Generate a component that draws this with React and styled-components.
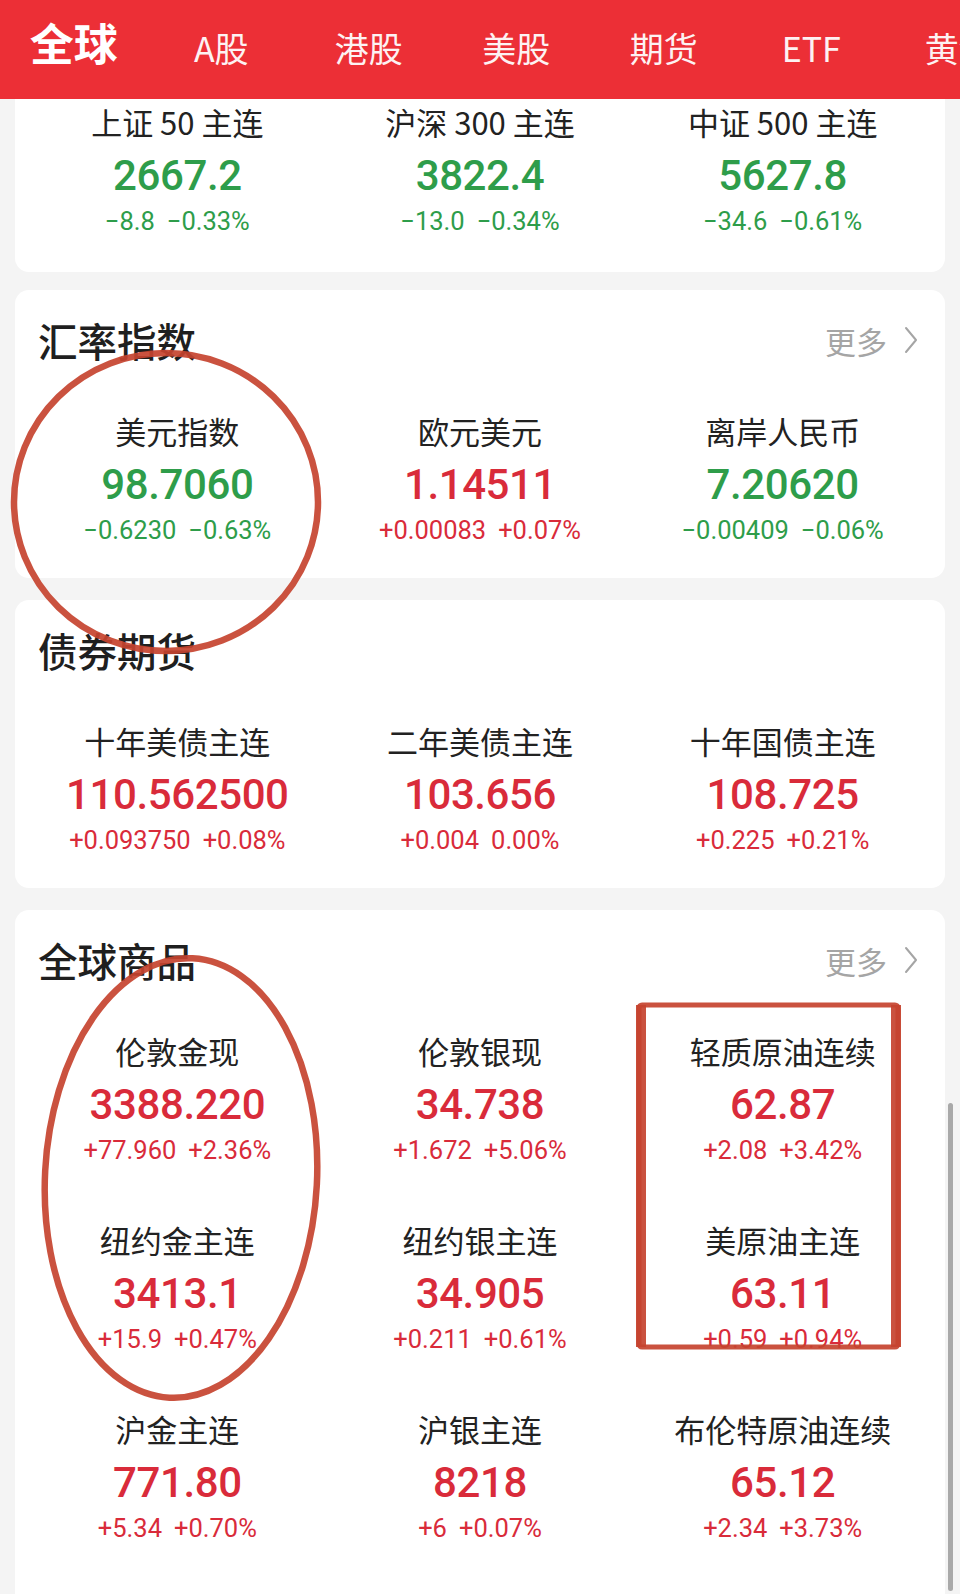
import React from 'react'
import styled, { createGlobalStyle } from 'styled-components'

const GlobalStyle = createGlobalStyle`
  html, body {
    margin: 0;
    padding: 0;
    background: #f4f4f4;
  }
  * {
    box-sizing: border-box;
  }
`

const UP = '#d92b3a'
const DOWN = '#2e9d4a'
const CJK = "'Noto Sans CJK SC', 'Noto Sans', sans-serif"
const NUM = "Roboto, 'Noto Sans', 'Noto Sans CJK SC', sans-serif"

const Page = styled.div`
  position: relative;
  width: 960px;
  height: 1594px;
  overflow: hidden;
  background: #f4f4f4;
  font-family: ${CJK};
  display: flex;
  flex-direction: column;
`

const Header = styled.header`
  position: relative;
  z-index: 1;
  flex-shrink: 0;
  height: 99px;
  background: #ec2f36;
  display: flex;
  align-items: center;
  padding-bottom: 3px;
  overflow: hidden;
  white-space: nowrap;
`

const Tab = styled.span`
  flex: 0 0 147.5px;
  text-align: center;
  color: #fff;
  font-family: ${CJK};
  font-size: ${(p) => (p.active ? '44px' : '34px')};
  font-weight: ${(p) => (p.active ? 700 : 400)};
  line-height: 1;
  margin-top: ${(p) => (p.active ? '-12px' : '0')};
  opacity: ${(p) => (p.active ? 1 : 0.94)};
`

const Feed = styled.main`
  flex: 1;
  display: flex;
  flex-direction: column;
  gap: 22px;
  padding: 0 15px;
`

const Card = styled.section`
  background: #fff;
  border-radius: ${(p) => (p.clipped ? '0 0 14px 14px' : p.open ? '14px 14px 0 0' : '14px')};
  padding: ${(p) => (p.clipped ? '0 11px 35px' : '20px 11px 32px')};
  margin: ${(p) => (p.clipped ? '-2px 0 -4px' : '0')};
  flex: ${(p) => (p.open ? 1 : 'none')};
`

const TitleRow = styled.div`
  display: flex;
  align-items: center;
  justify-content: space-between;
  height: 60px;
  padding: 0 16px 0 12px;
  margin-bottom: 36px;
`

const Title = styled.h2`
  margin: 0;
  font-family: ${CJK};
  font-size: 39.5px;
  font-weight: 500;
  color: #1f1f1f;
  line-height: 60px;
`

const More = styled.span`
  display: flex;
  align-items: center;
  gap: 17px;
  font-family: ${CJK};
  font-size: 31px;
  color: #a5a5a5;
  line-height: 1;
`

const Grid = styled.div`
  display: grid;
  grid-template-columns: repeat(3, 1fr);
  row-gap: 49px;
`

const Quote = styled.div`
  display: flex;
  flex-direction: column;
  align-items: center;
  white-space: nowrap;
`

const Label = styled.div`
  font-family: ${CJK};
  font-size: 31px;
  color: #222;
  line-height: 50px;
`

const Value = styled.div`
  font-family: ${NUM};
  font-size: 42px;
  font-weight: 500;
  letter-spacing: -0.4px;
  line-height: 58px;
  color: ${(p) => (p.down ? DOWN : UP)};
`

const Change = styled.div`
  display: flex;
  gap: 12px;
  font-family: ${NUM};
  font-size: 25.5px;
  line-height: 32px;
  color: ${(p) => (p.down ? DOWN : UP)};
`

const Marks = styled.svg`
  position: absolute;
  left: 0;
  top: 0;
  z-index: 2;
  pointer-events: none;
`

const ScrollThumb = styled.div`
  position: absolute;
  left: 948px;
  top: 1103px;
  width: 5px;
  height: 488px;
  border-radius: 3px;
  background: #a9a9a9;
`

const tabs = ['全球', 'A股', '港股', '美股', '期货', 'ETF', '黄金']

const sections = [
  {
    clipped: true,
    items: [
      ['上证 50 主连', '2667.2', '−8.8', '−0.33%', true],
      ['沪深 300 主连', '3822.4', '−13.0', '−0.34%', true],
      ['中证 500 主连', '5627.8', '−34.6', '−0.61%', true],
    ],
  },
  {
    title: '汇率指数',
    more: true,
    items: [
      ['美元指数', '98.7060', '−0.6230', '−0.63%', true],
      ['欧元美元', '1.14511', '+0.00083', '+0.07%', false],
      ['离岸人民币', '7.20620', '−0.00409', '−0.06%', true],
    ],
  },
  {
    title: '债券期货',
    items: [
      ['十年美债主连', '110.562500', '+0.093750', '+0.08%', false],
      ['二年美债主连', '103.656', '+0.004', '0.00%', false],
      ['十年国债主连', '108.725', '+0.225', '+0.21%', false],
    ],
  },
  {
    title: '全球商品',
    more: true,
    open: true,
    items: [
      ['伦敦金现', '3388.220', '+77.960', '+2.36%', false],
      ['伦敦银现', '34.738', '+1.672', '+5.06%', false],
      ['轻质原油连续', '62.87', '+2.08', '+3.42%', false],
      ['纽约金主连', '3413.1', '+15.9', '+0.47%', false],
      ['纽约银主连', '34.905', '+0.211', '+0.61%', false],
      ['美原油主连', '63.11', '+0.59', '+0.94%', false],
      ['沪金主连', '771.80', '+5.34', '+0.70%', false],
      ['沪银主连', '8218', '+6', '+0.07%', false],
      ['布伦特原油连续', '65.12', '+2.34', '+3.73%', false],
    ],
  },
]

function Chevron() {
  return (
    <svg width="14" height="28" viewBox="0 0 14 28">
      <path d="M2 2 L12 14 L2 26" fill="none" stroke="#a5a5a5" strokeWidth="2" strokeLinecap="round" strokeLinejoin="round" />
    </svg>
  )
}

export default function App() {
  return (
    <Page>
      <GlobalStyle />
      <Header>
        {tabs.map((t, i) => (
          <Tab key={t} active={i === 0}>
            {t}
          </Tab>
        ))}
      </Header>
      <Feed>
        {sections.map((s, si) => (
          <Card key={si} clipped={s.clipped} open={s.open}>
            {s.title && (
              <TitleRow>
                <Title>{s.title}</Title>
                {s.more && (
                  <More>
                    更多
                    <Chevron />
                  </More>
                )}
              </TitleRow>
            )}
            <Grid>
              {s.items.map(([name, price, diff, pct, down]) => (
                <Quote key={name}>
                  <Label>{name}</Label>
                  <Value down={down}>{price}</Value>
                  <Change down={down}>
                    <span>{diff}</span>
                    <span>{pct}</span>
                  </Change>
                </Quote>
              ))}
            </Grid>
          </Card>
        ))}
      </Feed>

      {/* hand-drawn red marks over the screenshot */}
      <Marks width="960" height="1594" viewBox="0 0 960 1594">
        <g fill="none" stroke="#c6432f" strokeOpacity="0.92">
          <ellipse cx="166" cy="502" rx="152" ry="149" strokeWidth="6.5" />
          <ellipse cx="181" cy="1178" rx="136" ry="220" strokeWidth="6.5" transform="rotate(3 181 1178)" />
          <rect x="639" y="1005" width="259" height="342" rx="3" strokeWidth="5" />
          <line x1="641" y1="1005" x2="641" y2="1347" strokeWidth="10" />
          <line x1="896" y1="1005" x2="896" y2="1347" strokeWidth="10" />
        </g>
      </Marks>
      <ScrollThumb />
    </Page>
  )
}
